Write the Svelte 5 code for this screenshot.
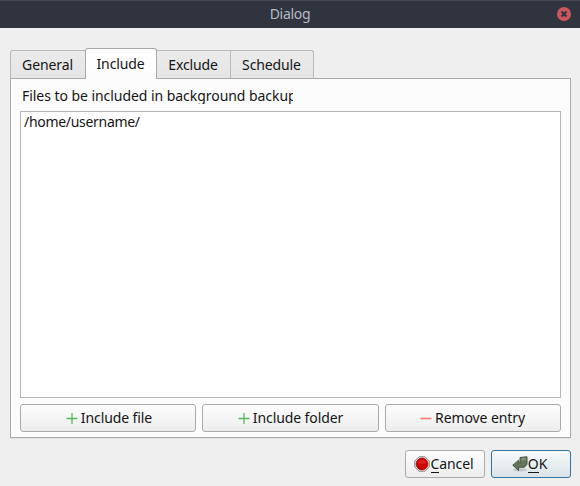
<script>
  let active = $state('Include');
  const tabs = [
    { name: 'General', w: 75 },
    { name: 'Include', w: 72 },
    { name: 'Exclude', w: 74 },
    { name: 'Schedule', w: 84 }
  ];
  const actions = [
    { label: 'Include file', plus: true, w: 176 },
    { label: 'Include folder', plus: true, w: 177 },
    { label: 'Remove entry', plus: false, w: 176 }
  ];
</script>

<div class="dialog">
  <header>
    <span>Dialog</span>
    <svg class="close" width="14" height="14" viewBox="0 0 14 14">
      <circle cx="7" cy="7" r="7" fill="#cc575d" />
      <path d="M4.5 4.5l5 5M9.5 4.5l-5 5" stroke="#2f343f" stroke-width="2" />
    </svg>
  </header>
  <nav>
    {#each tabs as tab}
      <button class="tab" class:active={tab.name === active} style:width="{tab.w}px" onclick={() => (active = tab.name)}>{tab.name}</button>
    {/each}
  </nav>
  <main>
    <div class="caption">Files to be included in background backup</div>
    <div class="list">/home/username/</div>
    <div class="actions">
      {#each actions as a}
        <button class="push" style:width="{a.w}px">
          <svg width="12" height="12" viewBox="0 0 12 12">
            {#if a.plus}
              <path d="M.5 6.5h11M6 1v11" stroke="#59b75c" stroke-width="1.3" fill="none" />
            {:else}
              <path d="M.5 6.5h11" stroke="#f67b76" stroke-width="1.6" fill="none" />
            {/if}
          </svg>
          <span>{a.label}</span>
        </button>
      {/each}
    </div>
  </main>
  <footer>
    <button class="push small">
      <svg width="16" height="16" viewBox="0 0 16 16">
        <path d="M5 .8h6L15.2 5v6L11 15.2H5L.8 11V5z" fill="#eee" stroke="#858585" />
        <circle cx="8" cy="8" r="5.9" fill="#cc0000" stroke="#a40000" stroke-width=".8" />
        <path d="M3.2 7a5 5 0 0 1 9.6 0Q8 9 3.2 7z" fill="#e52626" opacity=".7" />
      </svg>
      <span><i>C</i>ancel</span>
    </button>
    <button class="push small ok">
      <svg width="16" height="16" viewBox="0 0 16 16">
        <ellipse cx="8" cy="13.8" rx="7" ry="1.6" fill="#9aa3a3" opacity=".5" />
        <path d="M8 1.5L15 .7v7.6l-2.6 3H6.6v3.2L.8 9.2l5.8-5v2.6H8z" fill="#65775a" stroke="#3f4b3a" stroke-width=".9" />
        <path d="M9 2.2l5-.6v3H9z" fill="#81916f" />
      </svg>
      <span><i>O</i>K</span>
    </button>
  </footer>
</div>

<style>
  :global(body) { background: #efefef; }
  .dialog {
    width: 580px; height: 486px; overflow: hidden; box-sizing: border-box;
    background: #efefef; color: #151515;
    font: 14px/20px "Noto Sans", sans-serif;
  }
  header {
    height: 28px; position: relative; box-sizing: border-box;
    background: #2f343f; border-top: 1px solid #454a54;
    color: #b5bac5; text-align: center; line-height: 26px; letter-spacing: -.3px;
  }
  .close { position: absolute; right: 9px; top: 6px; }
  button { font: inherit; color: inherit; margin: 0; padding: 0; box-sizing: border-box; }
  nav { display: flex; align-items: flex-end; height: 31px; padding: 20px 10px 0; }
  .tab {
    height: 29px; border: 1px solid #b9b9b9; border-right: 0; border-bottom-color: #a9a9a9;
    background: linear-gradient(#ebebeb, #e5e5e5); letter-spacing: -.12px; padding-right: 1px;
  }
  .tab:first-child { border-radius: 3px 0 0 0; }
  .tab:last-child { border-right: 1px solid #b9b9b9; border-radius: 0 3px 0 0; }
  .tab.active {
    height: 31px; border: 1px solid #a9a9a9; border-bottom: 0; border-radius: 3px 3px 0 0;
    padding-bottom: 1px; background: linear-gradient(#fff, #fcfcfc); margin-right: -1px; z-index: 1;
  }
  main {
    width: 561px; height: 360px; margin: -1px 0 0 10px; box-sizing: border-box;
    padding: 7px 9px 0; border: 1px solid #a9a9a9; background: #fcfcfc; box-shadow: 0 1px #e3e3e3;
  }
  .caption {
    width: 271px; height: 18px; margin: 0 0 7px 2px; letter-spacing: -.05px;
    white-space: nowrap; overflow: hidden; line-height: 19px;
  }
  .list {
    height: 287px; box-sizing: border-box; border: 1px solid #b5b5b5;
    background: #fff; padding: 0 3px; letter-spacing: -.3px;
  }
  .actions { display: flex; justify-content: space-between; margin-top: 6px; }
  .push {
    height: 28px; display: flex; align-items: center; justify-content: center; gap: 3px;
    border: 1px solid #aaa; border-radius: 3px; background: linear-gradient(#fdfdfd, #ededed);
    letter-spacing: -.1px;
  }
  .actions .push:first-child { padding-left: 2px; }
  .actions .push:last-child { padding-right: 1px; }
  footer { display: flex; justify-content: flex-end; gap: 6px; padding: 12px 9px 0 0; }
  .small { width: 80px; gap: 1px; padding-right: 3px; }
  .ok { gap: 0; border-color: #3176a0; background: linear-gradient(#f8fafb, #dae3e8); }
  i { font-style: normal; box-shadow: 0 1px #151515; display: inline-block; height: 18px; line-height: 20px; }
</style>
